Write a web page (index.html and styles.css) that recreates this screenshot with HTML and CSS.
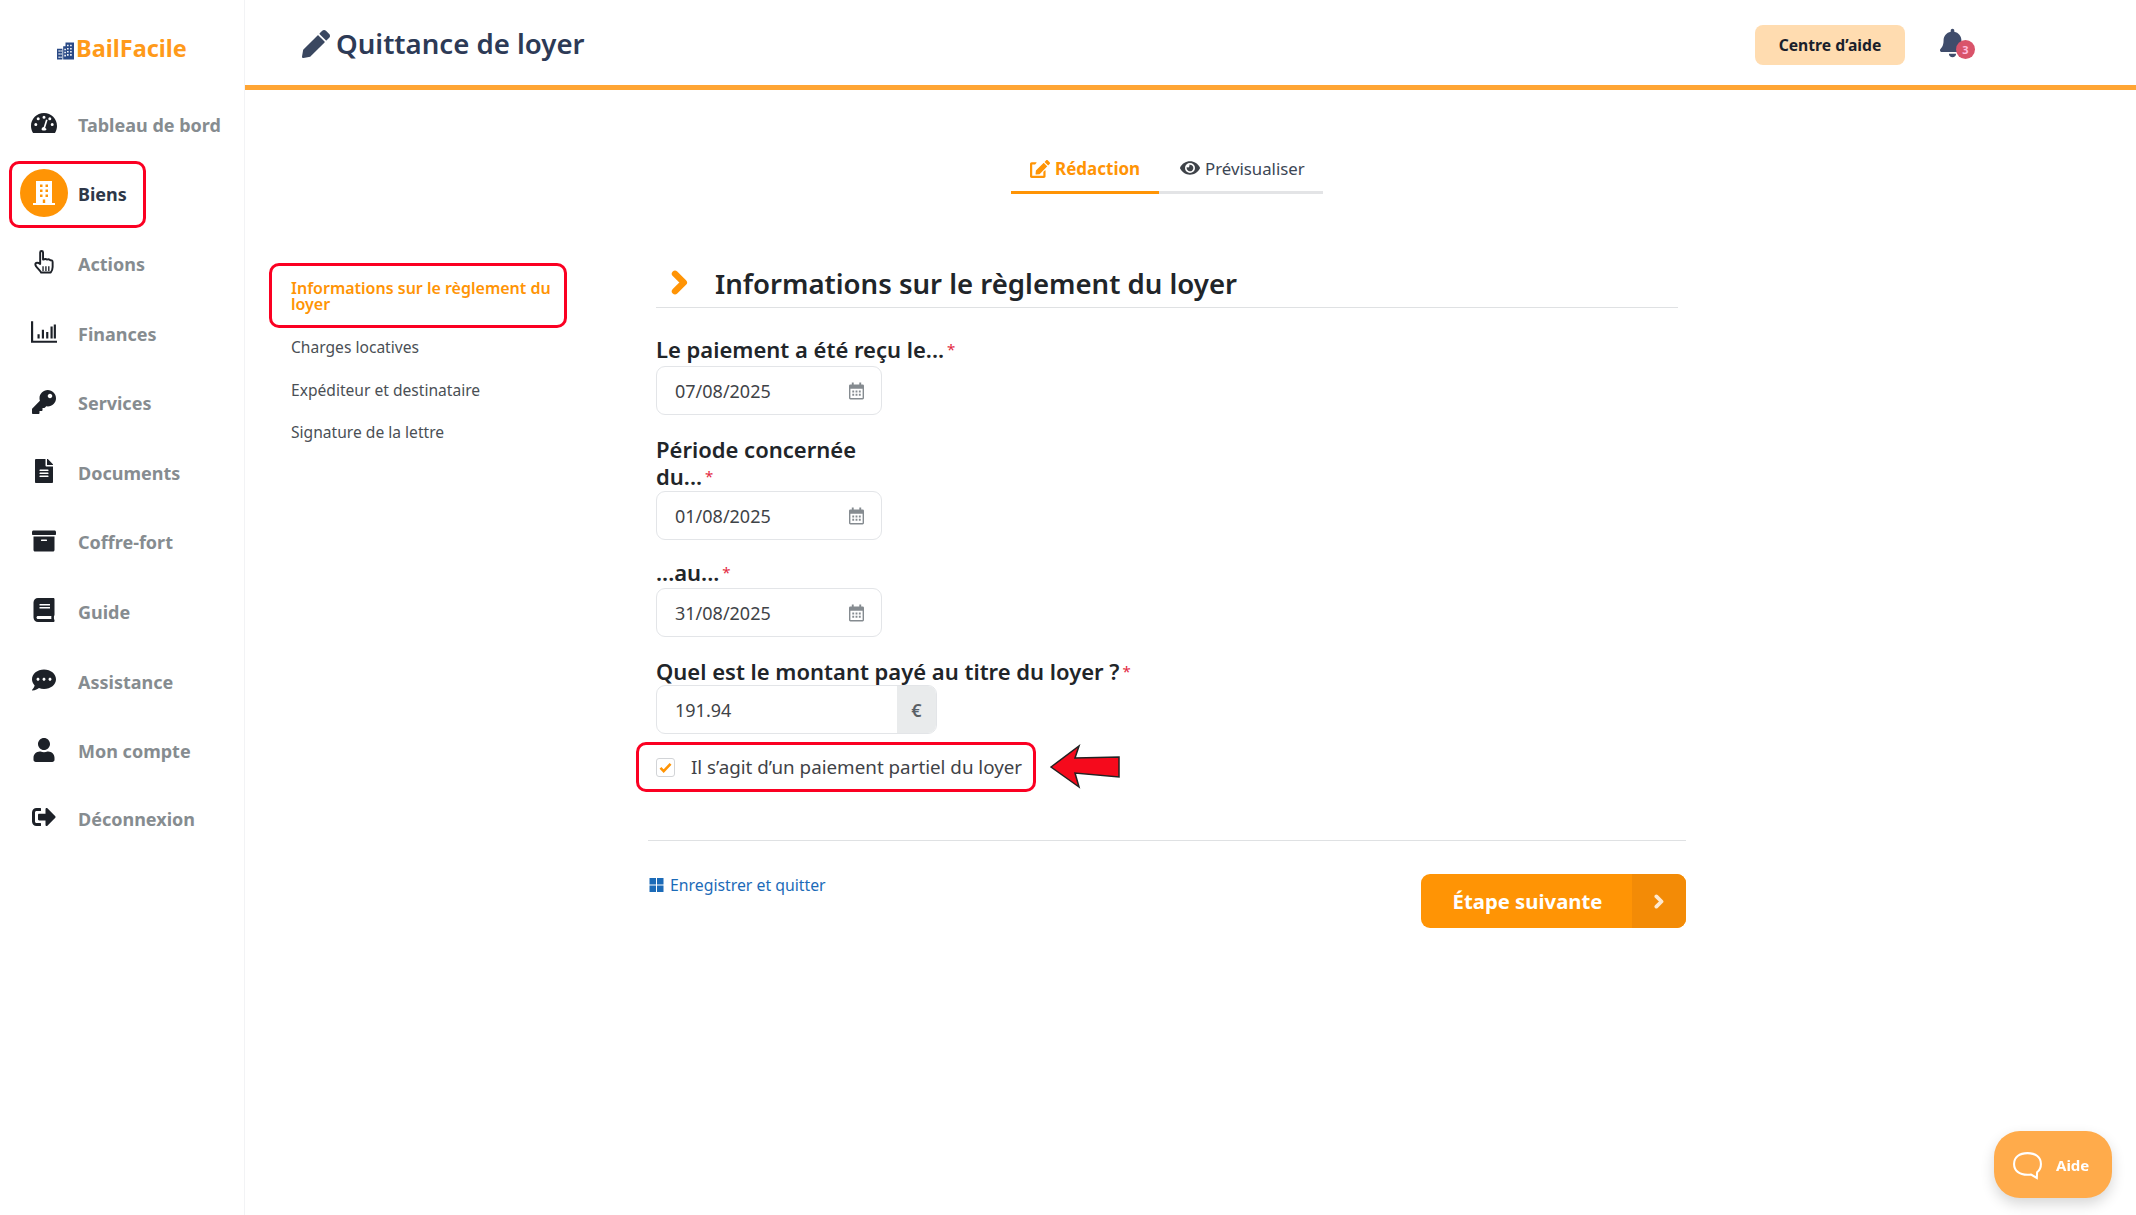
FILE: index.html
```html
<!DOCTYPE html>
<html lang="fr">
<head>
<meta charset="utf-8">
<title>Quittance de loyer</title>
<link rel="stylesheet" href="styles.css">
</head>
<body>
<svg class="sprite" aria-hidden="true">
  <symbol id="cal" viewBox="0 0 16 18"><path d="M3 0h2v2h6V0h2v2h1.500A1.500 1.500 0 0 1 16 3.500V16.500A1.500 1.500 0 0 1 14.500 18H1.500A1.500 1.500 0 0 1 0 16.500V3.500A1.500 1.500 0 0 1 1.500 2H3zM1.500 6.500V16.500H14.500V6.500z" fill-rule="evenodd"/><path d="M3.500 8.500h2v2h-2zM7 8.500h2v2H7zM10.500 8.500h2v2h-2zM3.500 12h2v2h-2zM7 12h2v2H7zM10.500 12h2v2h-2z"/></symbol>
  <symbol id="chev" viewBox="0 0 17 25"><path d="M4 3.800L12.800 12.500 4 21.200" fill="none" stroke-width="6.400" stroke-linejoin="round" stroke-linecap="round"/></symbol>
</svg>
<div class="app">
  <aside class="sidebar">
    <div class="logo">
      <svg class="logo-icon" viewBox="0 0 22 22"><path fill="#2a4a86" d="M0 8h7v14H0zM8 5h3V0h11v22H8z"/><path fill="#fff" d="M2 10h1.500v2H2zM4.500 10H6v2H4.500zM2 14h1.500v2H2zM4.500 14H6v2H4.500zM2 18h1.500v2H2zM4.500 18H6v2H4.500zM13 3h2v2h-2zM17 3h2v2h-2zM13 7h2v2h-2zM17 7h2v2h-2zM13 11h2v2h-2zM17 11h2v2h-2zM13 15h2v2h-2zM17 15h2v2h-2zM9.500 8h2v2h-2zM9.500 12h2v2h-2zM9.500 16h2v2h-2z"/></svg>
      <span class="logo-text">BailFacile</span>
    </div>
    <nav class="nav">
      <a class="nav-item"><span class="nav-icon"><svg class="ic" viewBox="0 0 26 20"><path fill-rule="evenodd" d="M13 0C5.800 0 0 5.800 0 13c0 2.500.7 4.800 1.900 6.800.2.200.5.200.7.200h20.800c.3 0 .5 0 .7-.2C25.300 17.800 26 15.500 26 13 26 5.800 20.200 0 13 0zm0 2.800a1.500 1.500 0 1 1 0 3 1.500 1.500 0 0 1 0-3zM4.800 13a1.500 1.500 0 1 1 0-3 1.500 1.500 0 0 1 0 3zm2.400-5.800a1.500 1.500 0 1 1 0-3 1.500 1.500 0 0 1 0 3zm8.200 9.100c0 .7-.6 1.200-1.200 1.200h-2.400c-.7 0-1.200-.5-1.200-1.200 0-1.200.9-2.200 2.100-2.400L15 6.500l1.600.4-2.500 8.100c.8.300 1.300 .9 1.300 1.300zM18.800 7.200a1.500 1.500 0 1 1 0-3 1.500 1.500 0 0 1 0 3zm2.400 5.800a1.500 1.500 0 1 1 0-3 1.500 1.500 0 0 1 0 3z"/></svg></span><span class="nav-label">Tableau de bord</span></a>
      <a class="nav-item active"><span class="nav-icon bubble"><svg class="ic-building" viewBox="0 0 22 24"><path fill="#fff" fill-rule="evenodd" d="M3 0h16v22h3v2H0v-2h3zM7 3.500v2.500h2.500V3.500zm5.500 0v2.500H15V3.500zM7 8.500v2.500h2.500V8.500zm5.500 0v2.500H15V8.500zM7 13.500v2.500h2.500v-2.500zm5.500 0v2.500H15v-2.500zM9.800 18.500v3.500h2.400v-3.500z"/></svg></span><span class="nav-label">Biens</span><span class="mark mark-nav"></span></a>
      <a class="nav-item"><span class="nav-icon"><svg class="ic ic-hand" viewBox="0 0 20 25"><path fill="#fff" stroke="#1d2128" stroke-width="2" stroke-linejoin="round" d="M6 2.500C6 .6 9 .6 9 2.500V10c2-1 3-1 4 0 1.500-.7 2.800-.5 3.500.7 1.500-.3 2.500.5 2.500 2v5c0 3-2 5.800-2 5.800H7c-1.500-3-6-6-6-8.500 0-2.500 3-2 5-.5z"/><path stroke="#1d2128" stroke-width="1.400" d="M9 17v5M12 17v5M15 17v5"/></svg></span><span class="nav-label">Actions</span></a>
      <a class="nav-item"><span class="nav-icon"><svg class="ic" viewBox="0 0 24 20"><path d="M0 0h2v18h22v2H0z"/><path d="M6 12h2v4H6zM10 8h2v8h-2zM14 10h2v6h-2zM18 5h2v11h-2zM21 3h2v13h-2z"/></svg></span><span class="nav-label">Finances</span></a>
      <a class="nav-item"><span class="nav-icon"><svg class="ic" viewBox="0 0 512 512"><path d="M512 176.001C512 273.203 433.202 352 336 352c-11.22 0-22.19-1.062-32.827-3.069l-24.012 27.014A23.999 23.999 0 0 1 261.223 384H224v40c0 13.255-10.745 24-24 24h-40v40c0 13.255-10.745 24-24 24H24c-13.255 0-24-10.745-24-24v-78.059c0-6.365 2.529-12.47 7.029-16.971l161.802-161.802C163.108 213.814 160 195.271 160 176 160 78.798 238.797.001 335.999 0 433.488-.001 512 78.511 512 176.001zM336 128c0 26.51 21.49 48 48 48s48-21.49 48-48-21.49-48-48-48-48 21.49-48 48z"/></svg></span><span class="nav-label">Services</span></a>
      <a class="nav-item"><span class="nav-icon"><svg class="ic" viewBox="0 0 384 512"><path d="M224 136V0H24C10.700 0 0 10.700 0 24v464c0 13.300 10.700 24 24 24h336c13.300 0 24-10.700 24-24V160H248c-13.200 0-24-10.800-24-24zm64 236c0 6.600-5.400 12-12 12H108c-6.600 0-12-5.400-12-12v-8c0-6.600 5.400-12 12-12h168c6.600 0 12 5.400 12 12v8zm0-64c0 6.600-5.400 12-12 12H108c-6.600 0-12-5.400-12-12v-8c0-6.600 5.400-12 12-12h168c6.600 0 12 5.400 12 12v8zm0-72v8c0 6.600-5.400 12-12 12H108c-6.600 0-12-5.400-12-12v-8c0-6.600 5.400-12 12-12h168c6.600 0 12 5.400 12 12zm96-114.100v6.100H256V0h6.100c6.400 0 12.500 2.500 17 7l97.900 98c4.500 4.500 7 10.600 7 16.900z"/></svg></span><span class="nav-label">Documents</span></a>
      <a class="nav-item"><span class="nav-icon"><svg class="ic" viewBox="0 0 512 512"><path d="M32 448c0 17.700 14.300 32 32 32h384c17.700 0 32-14.300 32-32V160H32v288zm160-212c0-6.600 5.400-12 12-12h104c6.600 0 12 5.400 12 12v8c0 6.600-5.400 12-12 12H204c-6.600 0-12-5.400-12-12v-8zM480 32H32C14.300 32 0 46.300 0 64v48c0 8.800 7.200 16 16 16h480c8.800 0 16-7.200 16-16V64c0-17.700-14.300-32-32-32z"/></svg></span><span class="nav-label">Coffre-fort</span></a>
      <a class="nav-item"><span class="nav-icon"><svg class="ic" viewBox="0 0 448 512"><path d="M448 360V24c0-13.300-10.700-24-24-24H96C43 0 0 43 0 96v320c0 53 43 96 96 96h328c13.300 0 24-10.700 24-24v-16c0-7.500-3.500-14.300-8.900-18.700-4.200-15.400-4.200-59.300 0-74.700 5.400-4.300 8.900-11.100 8.900-18.600zM128 134c0-3.300 2.700-6 6-6h212c3.300 0 6 2.700 6 6v20c0 3.300-2.700 6-6 6H134c-3.300 0-6-2.700-6-6v-20zm0 64c0-3.300 2.700-6 6-6h212c3.300 0 6 2.700 6 6v20c0 3.300-2.700 6-6 6H134c-3.300 0-6-2.700-6-6v-20zm253.400 250H96c-17.700 0-32-14.300-32-32 0-17.600 14.400-32 32-32h285.400c-1.900 17.100-1.900 46.900 0 64z"/></svg></span><span class="nav-label">Guide</span></a>
      <a class="nav-item"><span class="nav-icon"><svg class="ic" viewBox="0 0 512 512"><path d="M256 32C114.600 32 0 125.100 0 240c0 49.600 21.400 95 57 130.700C44.500 421.100 2.700 466 2.200 466.500c-2.200 2.300-2.800 5.700-1.500 8.700S4.800 480 8 480c66.300 0 116-31.800 140.600-51.400 32.700 12.300 69 19.400 107.400 19.400 141.400 0 256-93.100 256-208S397.400 32 256 32zM128 272c-17.700 0-32-14.300-32-32s14.300-32 32-32 32 14.300 32 32-14.300 32-32 32zm128 0c-17.700 0-32-14.300-32-32s14.300-32 32-32 32 14.300 32 32-14.300 32-32 32zm128 0c-17.700 0-32-14.300-32-32s14.300-32 32-32 32 14.300 32 32-14.300 32-32 32z"/></svg></span><span class="nav-label">Assistance</span></a>
      <a class="nav-item"><span class="nav-icon"><svg class="ic" viewBox="0 0 448 512"><path d="M224 256c70.700 0 128-57.300 128-128S294.700 0 224 0 96 57.300 96 128s57.300 128 128 128zm89.600 32h-16.700c-22.200 10.200-46.900 16-72.900 16s-50.600-5.800-72.900-16h-16.700C60.200 288 0 348.200 0 422.400V464c0 26.500 21.500 48 48 48h352c26.500 0 48-21.500 48-48v-41.600c0-74.200-60.200-134.400-134.400-134.400z"/></svg></span><span class="nav-label">Mon compte</span></a>
      <a class="nav-item nav-last"><span class="nav-icon"><svg class="ic" viewBox="0 0 512 512"><path d="M497 273L329 441c-15 15-41 4.500-41-17v-96H152c-13.300 0-24-10.700-24-24v-96c0-13.300 10.700-24 24-24h136V88c0-21.400 25.900-32 41-17l168 168c9.300 9.400 9.300 24.600 0 34zM192 436v-40c0-6.600-5.400-12-12-12H96c-17.700 0-32-14.300-32-32V160c0-17.700 14.300-32 32-32h84c6.600 0 12-5.400 12-12V76c0-6.600-5.400-12-12-12H96c-53 0-96 43-96 96v192c0 53 43 96 96 96h84c6.600 0 12-5.400 12-12z"/></svg></span><span class="nav-label">Déconnexion</span></a>
    </nav>
  </aside>
  <div class="main">
    <header class="topbar">
      <h1 class="title"><svg class="title-icon" viewBox="0 0 512 512"><path d="M497.900 142.100l-46.100 46.100c-4.700 4.700-12.300 4.700-17 0l-111-111c-4.700-4.700-4.700-12.300 0-17l46.100-46.100c18.700-18.700 49.100-18.700 67.900 0l60.100 60.100c18.800 18.700 18.800 49.100 0 67.900zM284.200 99.800L21.600 362.400.4 483.900c-2.900 16.400 11.400 30.600 27.800 27.800l121.500-21.300 262.600-262.600c4.700-4.700 4.700-12.300 0-17l-111-111c-4.800-4.700-12.400-4.700-17.100 0z"/></svg>Quittance de loyer</h1>
      <a class="help-btn">Centre d’aide</a>
      <span class="bell"><svg class="bell-icon" viewBox="0 0 448 512"><path d="M224 512c35.320 0 63.970-28.650 63.970-64H160.030c0 35.350 28.650 64 63.970 64zm215.390-149.710c-19.320-20.760-55.470-51.990-55.470-154.290 0-77.700-54.480-139.900-127.940-155.160V32c0-17.670-14.320-32-31.980-32s-31.980 14.330-31.980 32v20.840C118.560 68.100 64.080 130.300 64.080 208c0 102.300-36.150 133.530-55.470 154.290-6 6.450-8.660 14.160-8.610 21.710.11 16.400 12.980 32 32.100 32h383.800c19.120 0 32-15.600 32.100-32 .05-7.550-2.610-15.270-8.610-21.710z"/></svg><span class="badge">3</span></span>
    </header>
    <div class="content">
      <div class="tabs">
        <a class="tab tab-active"><svg class="tab-icon edit" viewBox="0 0 576 512"><path d="M402.600 83.200l90.200 90.200c3.800 3.800 3.800 10 0 13.800L274.400 405.600l-92.800 10.300c-12.400 1.400-22.900-9.100-21.500-21.500l10.300-92.800L388.800 83.200c3.800-3.800 10-3.800 13.800 0zm162-22.900l-48.800-48.800c-15.200-15.200-39.900-15.200-55.200 0l-35.400 35.400c-3.800 3.800-3.800 10 0 13.800l90.200 90.200c3.800 3.800 10 3.800 13.800 0l35.400-35.400c15.200-15.300 15.200-40 0-55.200zM384 346.200V448H64V128h73.100c3.200 0 6.200-1.300 8.500-3.500l40-40c7.600-7.600 2.200-20.500-8.500-20.500H48C21.500 64 0 85.500 0 112v352c0 26.500 21.500 48 48 48h352c26.500 0 48-21.500 48-48V306.200c0-10.700-12.900-16-20.500-8.500l-40 40c-2.200 2.300-3.500 5.300-3.500 8.500z"/></svg>Rédaction</a>
        <a class="tab"><svg class="tab-icon eye" viewBox="0 0 576 512"><path d="M572.520 241.400C518.290 135.590 410.930 64 288 64S57.680 135.640 3.480 241.410a32.350 32.350 0 0 0 0 29.190C57.710 376.410 165.070 448 288 448s230.320-71.640 284.520-177.410a32.350 32.350 0 0 0 0-29.190zM288 400a144 144 0 1 1 144-144 143.930 143.930 0 0 1-144 144zm0-240a95.310 95.310 0 0 0-25.310 3.790 47.850 47.850 0 0 1-66.900 66.900A95.780 95.780 0 1 0 288 160z"/></svg>Prévisualiser</a>
      </div>
      <div class="columns">
        <ul class="steps">
          <li class="step step-active">Informations sur le règlement du loyer<span class="mark mark-fill"></span></li>
          <li class="step">Charges locatives</li>
          <li class="step">Expéditeur et destinataire</li>
          <li class="step">Signature de la lettre</li>
        </ul>
        <section class="form-col">
          <div class="form-body">
            <h2 class="section-title"><svg class="section-chev"><use href="#chev"/></svg>Informations sur le règlement du loyer</h2>
            <div class="field f-first">
              <label class="label">Le paiement a été reçu le...<span class="req">*</span></label>
              <div class="input date"><span>07/08/2025</span><svg class="cal"><use href="#cal"/></svg></div>
            </div>
            <div class="field f-period">
              <label class="label narrow">Période concernée du...<span class="req">*</span></label>
              <div class="input date"><span>01/08/2025</span><svg class="cal"><use href="#cal"/></svg></div>
            </div>
            <div class="field f-au">
              <label class="label">...au...<span class="req">*</span></label>
              <div class="input date"><span>31/08/2025</span><svg class="cal"><use href="#cal"/></svg></div>
            </div>
            <div class="field f-amount">
              <label class="label">Quel est le montant payé au titre du loyer ?<span class="req">*</span></label>
              <div class="input amount"><span class="amount-val">191.94</span><span class="addon">€</span></div>
            </div>
            <div class="check-row">
              <span class="checkbox"><svg class="tick" viewBox="0 0 14 12"><path d="M1.500 6.500L5 10l7.500-8" fill="none" stroke="#ff9405" stroke-width="2.800"/></svg></span>
              <span class="check-label">Il s’agit d’un paiement partiel du loyer</span>
              <span class="mark mark-check"></span>
              <svg class="arrow" viewBox="0 0 72 46"><path fill="#f50a1c" stroke="#222" stroke-width="1.500" d="M2 23L30 2l-4 12 44-1v20l-44-4 4 14z"/></svg>
            </div>
          </div>
          <div class="actions">
            <a class="save"><svg class="save-icon" viewBox="0 0 14 14"><path d="M0 0h6.500v6.500H0zM7.500 0H14v6.500H7.500zM0 7.500h6.500V14H0zM7.500 7.500H14V14H7.500z"/></svg>Enregistrer et quitter</a>
            <a class="next"><span class="next-text">Étape suivante</span><span class="next-arrow"><svg class="next-chev"><use href="#chev"/></svg></span></a>
          </div>
        </section>
      </div>
    </div>
  </div>
</div>
<a class="aide"><svg class="aide-icon" viewBox="0 0 30 28"><path d="M15 2C7 2 2 6 2 12.500S7 23 15 23c1.500 0 2.500-.1 3.500-.3L24 26l.3-5.500C27 18.500 28 16 28 12.500 28 6 23 2 15 2z" fill="none" stroke="#fff" stroke-width="2"/></svg>Aide</a>
</body>
</html>
```

FILE: styles.css
```css
* { box-sizing: border-box; }
html, body { margin: 0; height: 100%; }
body { font-family: "Noto Sans", "Open Sans", sans-serif; color: #212529; background: #fff; overflow: hidden; }
a { text-decoration: none; color: inherit; }
.sprite { display: none; }
.app { display: flex; height: 1215px; }

.sidebar { width: 245px; flex: none; border-right: 1px solid #f2f3f5; padding-top: 5px; }
.logo { display: flex; align-items: center; height: 85px; padding-left: 57px; }
.logo-icon { width: 17px; height: 20px; margin-top: 6px; }
.logo-text { font-size: 23.5px; font-weight: 700; color: #ff9a1a; margin-left: 2px; }
.nav { display: flex; flex-direction: column; }
.nav-item { position: relative; display: flex; align-items: center; height: 69.6px; padding-left: 20px; }
.nav-last { margin-top: -2px; }
.nav-icon { width: 48px; display: flex; justify-content: center; align-items: center; flex: none; margin-right: 10px; margin-top: -3px; fill: #1d2128; }
.nav-icon.bubble { height: 48px; border-radius: 50%; background: #ff9405; margin-top: -3px; }
.ic { width: 26px; height: 24px; }
.ic-building { width: 22px; height: 24px; }
.nav-label { font-size: 18px; font-weight: 700; color: #868c90; }
.active .nav-label { color: #2d3748; }
.mark { position: absolute; border: 3px solid #fb0022; border-radius: 10px; pointer-events: none; }
.mark-nav { left: 9px; top: 1px; width: 137px; height: 67px; }

.main { flex: 1; min-width: 0; display: flex; flex-direction: column; }
.topbar { height: 90px; border-bottom: 5px solid #ffa534; display: flex; align-items: center; padding-left: 57px; padding-bottom: 1px; }
.title { margin: 1px 0 0; display: flex; align-items: center; font-size: 27.6px; font-weight: 600; color: #2d3a56; flex: none; width: 1450px; }
.title-icon { width: 28px; height: 28px; fill: #3a4760; margin-right: 6px; margin-top: 2px; }
.help-btn { width: 150px; height: 40px; background: #ffdcb0; border-radius: 8px; display: flex; align-items: center; justify-content: center; font-size: 15.7px; font-weight: 700; color: #1a1f2b; margin-left: 3px; margin-top: 6px; flex: none; }
.bell { position: relative; margin-left: 35px; margin-top: 6px; width: 34px; height: 34px; }
.bell-icon { width: 25px; height: 30px; fill: #3f4c6b; position: absolute; left: 0; top: 0; }
.badge { position: absolute; left: 16px; top: 12px; width: 19px; height: 19px; border-radius: 50%; background: #d9536a; color: #fbd; font-size: 11px; font-weight: 700; display: flex; align-items: center; justify-content: center; }

.content { padding: 60px 0 0 24px; }
.tabs { display: flex; margin-left: 742px; width: 312px; height: 44px; }
.tab { display: flex; align-items: center; height: 44px; padding-bottom: 5px; border-bottom: 3px solid #e3e4e6; font-size: 16.8px; color: #3c4654; padding-left: 21px; flex: 1; white-space: nowrap; }
.tab-active { flex: none; width: 148px; padding-left: 19px; padding-bottom: 4px; font-size: 17px; color: #ff9405; font-weight: 700; border-bottom-color: #ff9405; }
.tab-icon { height: 18px; width: 20px; margin-right: 5px; }
.edit { fill: #ff9405; }
.eye { fill: #3f4349; }

.columns { display: grid; grid-template-columns: 379px 1038px; margin-top: 69px; }
.steps { list-style: none; margin: 0; padding: 0; width: 298px; }
.step { font-size: 15.6px; color: #4a4f55; padding: 0 22px; height: 42.5px; display: flex; align-items: center; line-height: 16px; position: relative; white-space: nowrap; }
.step-active { height: 65px; font-size: 16px; color: #ff9405; font-weight: 600; white-space: normal; margin-bottom: -2px; padding-top: 1px; padding-right: 9px; }
.mark-fill { inset: 0; }

.form-body { padding: 0 8px 0 8px; }
.section-title { margin: 0; height: 45px; display: flex; align-items: flex-start; font-size: 27.57px; line-height: 41px; font-weight: 600; color: #212529; border-bottom: 1px solid #dfe1e3; }
.section-chev { width: 17px; height: 25px; fill: none; stroke: #ff9405; margin: 7px 27px 0 15px; flex: none; }
.field { display: flex; flex-direction: column; }
.f-first { margin-top: 28px; }
.f-period { margin-top: 21px; }
.f-au { margin-top: 19px; }
.f-amount { margin-top: 21px; }
.label { font-size: 22px; font-weight: 600; line-height: 27px; color: #212529; }
.f-first .label { margin-bottom: 3px; }
.f-period .label { margin-bottom: 1px; }
.f-au .label { margin-bottom: 2px; }
.narrow { width: 230px; }
.req { color: #e3293f; font-size: 15px; margin-left: 3px; vertical-align: 3px; font-weight: 400; }
.input { height: 49px; border: 1.5px solid #e3e5e8; border-radius: 9px; display: flex; align-items: center; font-size: 18px; color: #3f4347; }
.date { width: 226px; padding: 0 17px 0 18px; justify-content: space-between; }
.cal { width: 15px; height: 18px; fill: #858b90; }
.amount { width: 281px; padding-left: 18px; justify-content: space-between; overflow: hidden; }
.addon { width: 39px; height: 100%; background: #e9ebec; display: flex; align-items: center; justify-content: center; font-size: 18px; font-weight: 600; color: #5a6066; }
.check-row { position: relative; display: flex; align-items: center; height: 50px; margin-top: 8px; margin-left: -20px; padding-left: 20px; width: 400px; }
.checkbox { width: 19px; height: 19px; border: 1.5px solid #d2d4d7; border-radius: 3px; display: flex; align-items: center; justify-content: center; flex: none; }
.tick { width: 13px; height: 11px; }
.check-label { margin-left: 16px; font-size: 18.8px; color: #3f4347; white-space: nowrap; }
.mark-check { inset: 0; }
.arrow { position: absolute; left: 413px; top: 2px; width: 72px; height: 46px; }

.actions { display: flex; justify-content: space-between; align-items: flex-start; margin-top: 48px; border-top: 1px solid #dfe1e3; padding-top: 33px; }
.save { display: flex; align-items: center; font-size: 15.8px; color: #1c6bb8; margin-left: 1px; }
.save-icon { width: 15px; height: 14px; fill: #1c6bb8; margin-right: 6px; }
.next { width: 265px; height: 54px; background: #ff9405; border-radius: 9px; display: flex; overflow: hidden; color: #fff; }
.next-text { flex: 1; display: flex; align-items: center; justify-content: center; font-size: 20.3px; font-weight: 700; padding: 0 0 1px 2px; }
.next-arrow { width: 54px; background: #f38b06; display: flex; align-items: center; justify-content: center; }
.next-chev { width: 10px; height: 15px; fill: none; stroke: #fde9d0; }

.aide { position: fixed; right: 24px; bottom: 17px; width: 118px; height: 67px; border-radius: 26px; background: #ffab4b; box-shadow: 0 6px 14px rgba(0,0,0,.16); color: #fff; font-size: 15px; font-weight: 700; display: flex; align-items: center; padding-left: 18px; }
.aide-icon { width: 31px; height: 29px; margin-right: 13px; margin-top: 2px; }
```
